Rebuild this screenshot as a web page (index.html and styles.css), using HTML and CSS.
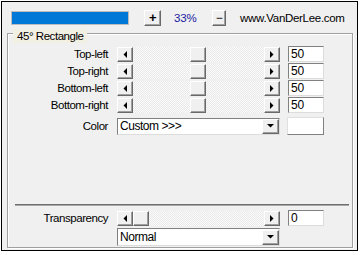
FILE: index.html
```html
<!DOCTYPE html>
<html>
<head>
<meta charset="utf-8">
<link rel="stylesheet" href="styles.css">
</head>
<body>
<div class="window">
  <div class="header">
    <div class="progress"><div class="progress-fill"></div></div>
    <div class="btn btn-plus">+</div>
    <span class="percent">33%</span>
    <div class="btn btn-minus">&minus;</div>
    <span class="site">www.VanDerLee.com</span>
  </div>
  <div class="group">
    <div class="legend">45° Rectangle</div>
    <div class="rows">
      <div class="row">
        <span class="label">Top-left</span>
        <div class="scroll">
          <div class="btn arrow"><svg width="4" height="7" viewBox="0 0 4 7"><polygon points="4,0 4,7 0.5,3.5" fill="#000"/></svg></div>
          <div class="track"><div class="btn thumb" style="margin-left:57px"></div></div>
          <div class="btn arrow"><svg width="4" height="7" viewBox="0 0 4 7"><polygon points="0,0 0,7 3.5,3.5" fill="#000"/></svg></div>
        </div>
        <div class="edit">50</div>
      </div>
      <div class="row">
        <span class="label">Top-right</span>
        <div class="scroll">
          <div class="btn arrow"><svg width="4" height="7" viewBox="0 0 4 7"><polygon points="4,0 4,7 0.5,3.5" fill="#000"/></svg></div>
          <div class="track"><div class="btn thumb" style="margin-left:57px"></div></div>
          <div class="btn arrow"><svg width="4" height="7" viewBox="0 0 4 7"><polygon points="0,0 0,7 3.5,3.5" fill="#000"/></svg></div>
        </div>
        <div class="edit">50</div>
      </div>
      <div class="row">
        <span class="label">Bottom-left</span>
        <div class="scroll">
          <div class="btn arrow"><svg width="4" height="7" viewBox="0 0 4 7"><polygon points="4,0 4,7 0.5,3.5" fill="#000"/></svg></div>
          <div class="track"><div class="btn thumb" style="margin-left:57px"></div></div>
          <div class="btn arrow"><svg width="4" height="7" viewBox="0 0 4 7"><polygon points="0,0 0,7 3.5,3.5" fill="#000"/></svg></div>
        </div>
        <div class="edit">50</div>
      </div>
      <div class="row">
        <span class="label">Bottom-right</span>
        <div class="scroll">
          <div class="btn arrow"><svg width="4" height="7" viewBox="0 0 4 7"><polygon points="4,0 4,7 0.5,3.5" fill="#000"/></svg></div>
          <div class="track"><div class="btn thumb" style="margin-left:57px"></div></div>
          <div class="btn arrow"><svg width="4" height="7" viewBox="0 0 4 7"><polygon points="0,0 0,7 3.5,3.5" fill="#000"/></svg></div>
        </div>
        <div class="edit">50</div>
      </div>
    </div>
    <div class="row color-row">
      <span class="label">Color</span>
      <div class="combo">
        <span class="combo-text">Custom &gt;&gt;&gt;</span>
        <div class="btn drop"><svg width="7" height="4" viewBox="0 0 7 4"><polygon points="0,0 7,0 3.5,3.5" fill="#000"/></svg></div>
      </div>
      <div class="swatch"></div>
    </div>
    <div class="bottom">
      <div class="separator"></div>
      <div class="row">
        <span class="label">Transparency</span>
        <div class="scroll">
          <div class="btn arrow"><svg width="4" height="7" viewBox="0 0 4 7"><polygon points="4,0 4,7 0.5,3.5" fill="#000"/></svg></div>
          <div class="track"><div class="btn thumb" style="margin-left:0px"></div></div>
          <div class="btn arrow"><svg width="4" height="7" viewBox="0 0 4 7"><polygon points="0,0 0,7 3.5,3.5" fill="#000"/></svg></div>
        </div>
        <div class="edit">0</div>
      </div>
      <div class="row mode-row">
        <div class="combo">
          <span class="combo-text">Normal</span>
          <div class="btn drop"><svg width="7" height="4" viewBox="0 0 7 4"><polygon points="0,0 7,0 3.5,3.5" fill="#000"/></svg></div>
        </div>
      </div>
    </div>
  </div>
</div>
</body>
</html>
```

FILE: styles.css
```css
* { box-sizing: border-box; }
html, body { margin: 0; padding: 0; background: #fff; }
body {
  font-family: "Liberation Sans", Arial, sans-serif;
  font-size: 11.5px;
  letter-spacing: -0.45px;
  color: #000;
}
.window {
  margin: 1px 0 0 1px;
  width: 357px;
  height: 250px;
  border: 1px solid #000;
  background: #f0f0f0;
  padding: 0 4px 2px 5px;
  display: flex;
  flex-direction: column;
}
.header {
  height: 31px;
  display: flex;
  align-items: center;
  padding-left: 4px;
  padding-top: 1px;
}
.progress {
  width: 118px;
  height: 14px;
  border: 1px solid #bcbcbc;
  background: #e6e6e6;
}
.progress-fill {
  width: 100%;
  height: 100%;
  background: #0078d7;
}
.btn {
  background: #f0f0f0;
  border: 1px solid;
  border-color: #fff #696969 #696969 #fff;
  box-shadow: inset -1px -1px 0 #a0a0a0;
  display: flex;
  align-items: center;
  justify-content: center;
}
.btn-plus {
  width: 17px;
  height: 16px;
  margin-left: 15px;
  font-size: 13px;
  font-weight: bold;
  line-height: 1;
  padding-bottom: 1px;
}
.btn-minus {
  width: 14px;
  height: 16px;
  margin-left: 13px;
  font-size: 12px;
  line-height: 1;
  padding-bottom: 1px;
}
.percent {
  margin-left: 13px;
  color: #1a1aa0;
  width: 25px;
  letter-spacing: -0.2px;
}
.site {
  margin-left: 14px;
  letter-spacing: -0.3px;
}
.group {
  position: relative;
  flex: 1;
  border: 1px solid #a0a0a0;
  box-shadow: 1px 1px 0 #fff, inset 1px 1px 0 #fff;
  display: flex;
  flex-direction: column;
  padding: 12px 0 1px 0;
}
.legend {
  position: absolute;
  top: -5px;
  left: 5px;
  padding: 0 3px 0 4px;
  height: 14px;
  line-height: 14px;
  background: #f2efe3;
}
.rows {
  display: flex;
  flex-direction: column;
  gap: 1px;
}
.row {
  display: flex;
  align-items: center;
  height: 16px;
}
.label {
  width: 100px;
  text-align: right;
  margin-right: 9px;
  white-space: nowrap;
}
.scroll {
  width: 163px;
  height: 15px;
  display: flex;
}
.arrow {
  width: 16px;
  height: 15px;
  flex: none;
}
.track {
  flex: 1;
  display: flex;
  background: repeating-conic-gradient(#fbfbfb 0 25%, #e9e9e9 0 50%) 0 0 / 2px 2px;
}
.thumb {
  width: 16px;
  height: 15px;
}
.edit {
  width: 36px;
  height: 16px;
  margin-left: 8px;
  background: #fff;
  border: 1px solid;
  border-color: #808080 #dcdcdc #dcdcdc #808080;
  padding-left: 2px;
  line-height: 14px;
  font-size: 12px;
  letter-spacing: -0.2px;
}
.color-row {
  height: 18px;
  margin-top: 4px;
}
.combo {
  width: 163px;
  height: 17px;
  background: #fff;
  border: 1px solid;
  border-color: #808080 #dcdcdc #dcdcdc #808080;
  display: flex;
  align-items: center;
  justify-content: space-between;
}
.combo-text {
  padding-left: 2px;
  font-size: 12px;
}
.drop {
  width: 17px;
  height: 15px;
  margin-right: 0;
}
.swatch {
  width: 37px;
  height: 18px;
  margin-left: 7px;
  background: #fff;
  border: 1px solid;
  border-color: #e0e0e0 #808080 #808080 #e0e0e0;
}
.bottom {
  margin-top: auto;
  display: flex;
  flex-direction: column;
}
.separator {
  margin: 0 3px 4px 7px;
  height: 2px;
  border-top: 1px solid #6e6e6e;
  border-bottom: 1px solid #a8a8a8;
}
.mode-row {
  height: 18px;
  margin-top: 2px;
  padding-left: 109px;
}
.mode-row .combo { height: 18px; }
```
